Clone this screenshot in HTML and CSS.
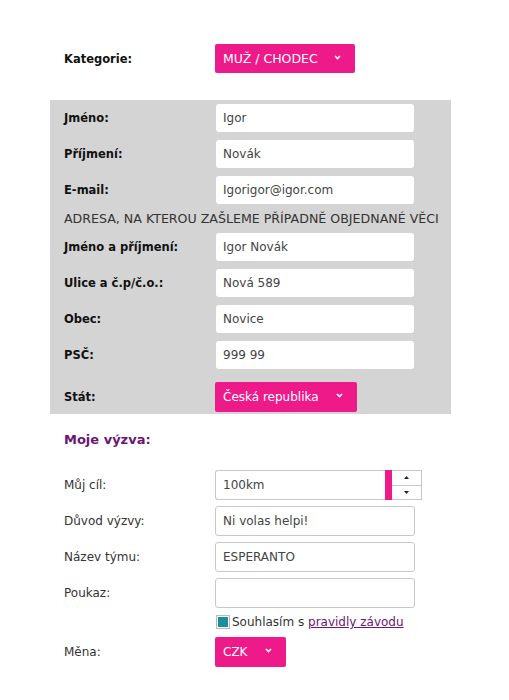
FILE: index.html
```html
<!DOCTYPE html>
<html lang="cs">
<head>
<meta charset="utf-8">
<title>Registrace</title>
<link rel="stylesheet" href="styles.css">
</head>
<body>
<form class="form">
  <div class="row row-cat">
    <label class="label bold">Kategorie:</label>
    <div class="select sel-cat"><span>MUŽ / CHODEC</span><svg class="chev" width="7" height="5" viewBox="0 0 7 5"><path d="M1 1 L3.5 3.5 L6 1" fill="none" stroke="#fff" stroke-width="1.6"/></svg></div>
  </div>

  <div class="panel">
    <div class="row"><label class="label bold">Jméno:</label><div class="input plain">Igor</div></div>
    <div class="row"><label class="label bold">Příjmení:</label><div class="input plain">Novák</div></div>
    <div class="row"><label class="label bold">E-mail:</label><div class="input plain">Igorigor@igor.com</div></div>
    <div class="note">ADRESA, NA KTEROU ZAŠLEME PŘÍPADNĚ OBJEDNANÉ VĚCI</div>
    <div class="row"><label class="label bold">Jméno a příjmení:</label><div class="input plain">Igor Novák</div></div>
    <div class="row"><label class="label bold">Ulice a č.p/č.o.:</label><div class="input plain">Nová 589</div></div>
    <div class="row"><label class="label bold">Obec:</label><div class="input plain">Novice</div></div>
    <div class="row"><label class="label bold">PSČ:</label><div class="input plain">999 99</div></div>
    <div class="row row-stat"><label class="label bold">Stát:</label><div class="select sel-stat"><span>Česká republika</span><svg class="chev" width="7" height="5" viewBox="0 0 7 5"><path d="M1 1 L3.5 3.5 L6 1" fill="none" stroke="#fff" stroke-width="1.6"/></svg></div></div>
  </div>

  <h2 class="heading">Moje výzva:</h2>

  <div class="section">
    <div class="row"><label class="label">Můj cíl:</label>
      <div class="number">
        <div class="input bordered num-field">100km<span class="num-bar"></span></div>
        <div class="stepper">
          <span class="step"><svg width="5" height="3" viewBox="0 0 5 3"><path d="M0 3 L2.5 0 L5 3Z" fill="#222"/></svg></span>
          <span class="step"><svg width="5" height="3" viewBox="0 0 5 3"><path d="M0 0 L2.5 3 L5 0Z" fill="#222"/></svg></span>
        </div>
      </div>
    </div>
    <div class="row"><label class="label">Důvod výzvy:</label><div class="input bordered">Ni volas helpi!</div></div>
    <div class="row"><label class="label">Název týmu:</label><div class="input bordered">ESPERANTO</div></div>
    <div class="row"><label class="label">Poukaz:</label><div class="input bordered"></div></div>
    <div class="row row-check"><span class="label"></span><span class="check"></span><span class="check-text">Souhlasím s <a class="link" href="#">pravidly závodu</a></span></div>
    <div class="row"><label class="label">Měna:</label><div class="select sel-cur"><span>CZK</span><svg class="chev" width="7" height="5" viewBox="0 0 7 5"><path d="M1 1 L3.5 3.5 L6 1" fill="none" stroke="#fff" stroke-width="1.6"/></svg></div></div>
  </div>
</form>
</body>
</html>
```

FILE: styles.css
```css
* { box-sizing: border-box; }
html, body { margin: 0; padding: 0; background: #fff; }
body {
  font-family: "DejaVu Sans", "Open Sans", sans-serif;
  font-size: 12px;
  color: #222;
}
.form {
  width: 401px;
  margin: 0 0 0 50px;
  padding-top: 44px;
}
.row {
  display: flex;
  align-items: center;
  padding-left: 14px;
}
.label {
  width: 152px;
  flex: none;
}
.bold { font-weight: bold; color: #111; font-size: 11.5px; }
.row-cat { margin-bottom: 27px; }

.select {
  display: flex;
  align-items: center;
  justify-content: space-between;
  height: 29px;
  background: #ee1a8a;
  color: #fff;
  border-radius: 2px;
  padding: 0 14px 0 8px;
  font-size: 12px;
  margin-left: -1px;
}
.sel-cat { width: 140px; font-size: 12.5px; }
.sel-stat { width: 142px; height: 30px; }
.sel-cur { width: 71px; height: 30px; }
.chev { flex: none; margin-top: -3px; }

.panel {
  background: #d4d4d4;
  padding: 4px 0 2px;
  display: flex;
  flex-direction: column;
  gap: 8px;
}
.input {
  height: 28px;
  width: 198px;
  background: #fff;
  border-radius: 3px;
  display: flex;
  align-items: center;
  padding-left: 7px;
  color: #444;
  font-size: 12px;
}
.note {
  padding-left: 14px;
  height: 21px;
  line-height: 21px;
  margin: -4px 0;
  font-size: 12.6px;
  color: #333;
  white-space: nowrap;
}
.row-stat { margin-top: 5px; }

.heading {
  margin: 0;
  padding: 18px 0 0 14px;
  height: 56px;
  font-size: 13px;
  font-weight: bold;
  color: #6b1670;
}

.section {
  display: flex;
  flex-direction: column;
  gap: 6px;
}
.section .label { color: #333; font-size: 12px; }
.bordered {
  width: 200px;
  height: 30px;
  border: 1px solid #c8c8c8;
  margin-left: -1px;
}
.number { display: flex; margin-left: -1px; }
.num-field {
  width: 177px;
  margin-left: 0;
  border-radius: 3px 0 0 3px;
  position: relative;
  border-right: none;
}
.num-bar {
  position: absolute;
  right: 0;
  top: -1px;
  bottom: -1px;
  width: 7px;
  background: #ee1a8a;
}
.stepper {
  width: 30px;
  height: 30px;
  border: 1px solid #c8c8c8;
  border-left: none;
  display: flex;
  flex-direction: column;
}
.step {
  flex: 1;
  display: flex;
  align-items: center;
  justify-content: center;
}
.step + .step { border-top: 1px solid #c8c8c8; }

.row-check { height: 16px; margin: 0 0 1px; }
.check {
  width: 14px;
  height: 14px;
  border: 1px solid #bbb;
  background: #1a8fa0;
  box-shadow: inset 0 0 0 1px #fff;
  flex: none;
  margin-right: 2px;
}
.check-text { color: #333; font-size: 12px; white-space: nowrap; }
.link { color: #6b1670; text-decoration: underline; }
```
